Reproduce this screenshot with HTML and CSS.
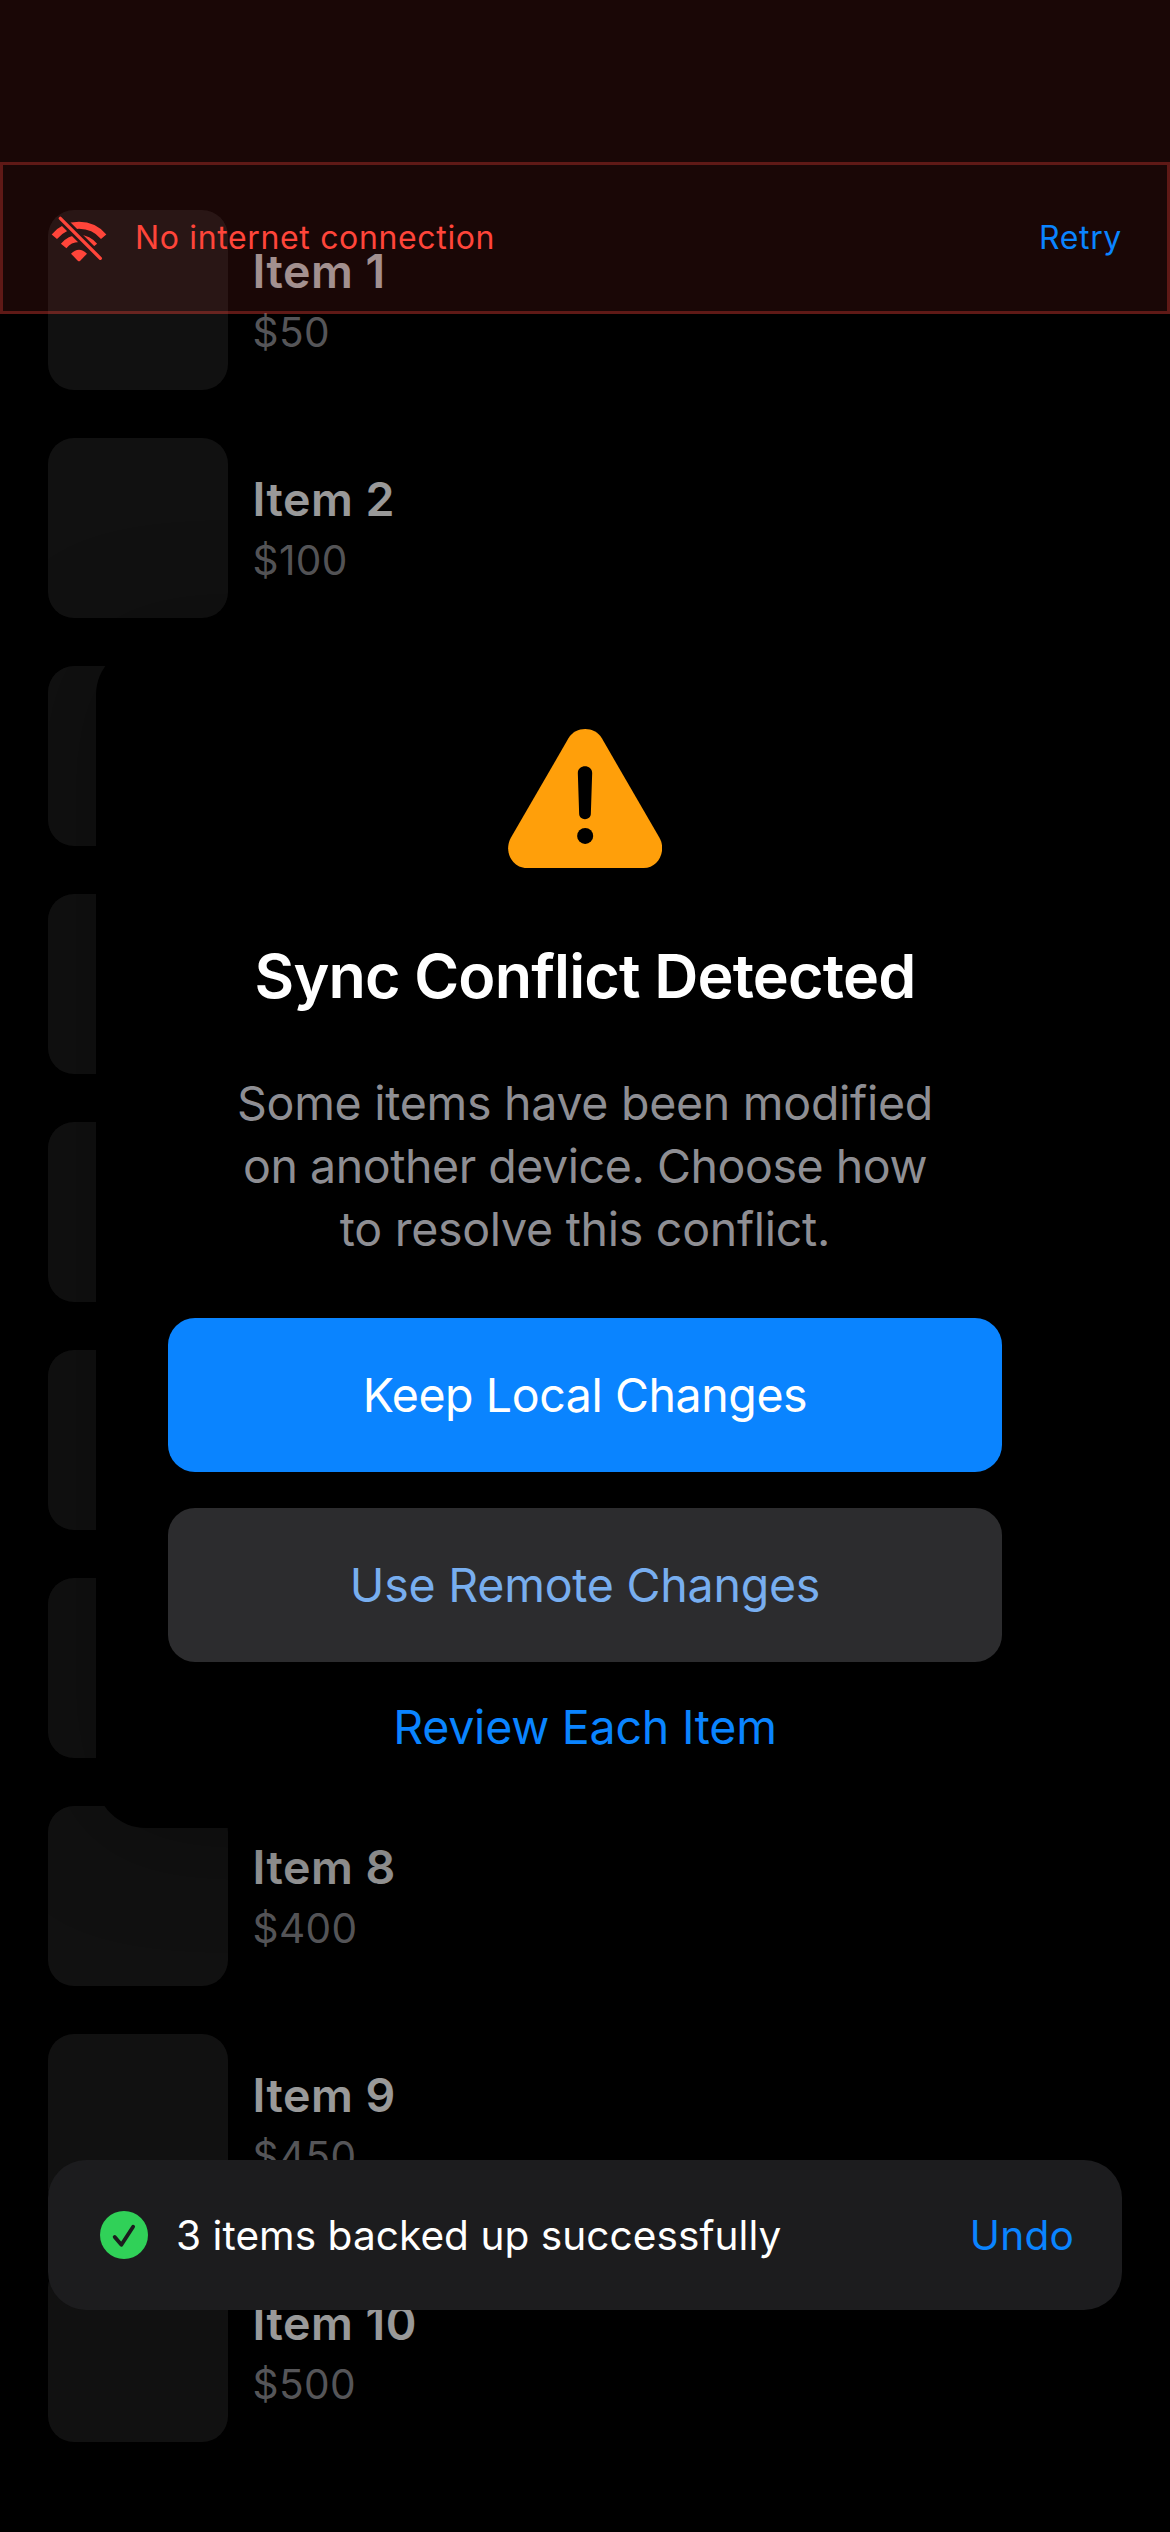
FILE: index.html
```html
<!DOCTYPE html>
<html lang="en">
<head>
<meta charset="utf-8">
<title>Items</title>
<link rel="stylesheet" href="styles.css">
</head>
<body>
<div class="screen">
  <ul class="list">
    <li class="row"><div class="thumb"></div><div class="info"><h2 class="name">Item 1</h2><p class="price">$50</p></div></li>
    <li class="row"><div class="thumb"></div><div class="info"><h2 class="name">Item 2</h2><p class="price">$100</p></div></li>
    <li class="row"><div class="thumb"></div></li>
    <li class="row"><div class="thumb"></div></li>
    <li class="row"><div class="thumb"></div></li>
    <li class="row"><div class="thumb"></div></li>
    <li class="row"><div class="thumb"></div></li>
    <li class="row"><div class="thumb"></div><div class="info"><h2 class="name">Item 8</h2><p class="price">$400</p></div></li>
    <li class="row"><div class="thumb"></div><div class="info"><h2 class="name">Item 9</h2><p class="price">$450</p></div></li>
    <li class="row"><div class="thumb"></div><div class="info"><h2 class="name">Item 10</h2><p class="price">$500</p></div></li>
  </ul>

  <div class="backdrop">
    <section class="dialog">
      <svg class="warning" viewBox="84 87 461 416" aria-hidden="true">
        <path fill="#ff9f0a" d="M265 115C287 78 343 78 365 115L537 412C560 452 534 503 490 503H140C96 503 70 452 93 412Z"/>
        <path d="M293 219C293 192 336 192 336 219L332 341C332 362 297 362 297 341Z"/>
        <circle cx="315" cy="407" r="24"/>
      </svg>
      <h1 class="title">Sync Conflict Detected</h1>
      <p class="message">Some items have been modified<br><span class="tight">on another device. Choose how</span><br>to resolve this conflict.</p>
      <button class="button primary">Keep Local Changes</button>
      <button class="button secondary">Use Remote Changes</button>
      <button class="link">Review Each Item</button>
    </section>
  </div>

  <header class="offline">
    <div class="banner">
      <svg class="wifi" viewBox="60 75 174 144" aria-hidden="true">
        <mask id="cut" maskUnits="userSpaceOnUse" x="60" y="75" width="174" height="144">
          <rect x="60" y="75" width="174" height="144" fill="#fff"/>
          <path d="M81 75L221 215" stroke="#000" stroke-width="26"/>
        </mask>
        <g mask="url(#cut)" fill="none" stroke="#ff453a" stroke-width="21">
          <path d="M73 140A97 97 0 0 1 221 140"/>
          <path d="M101 168A58 58 0 0 1 193 168"/>
        </g>
        <path d="M123 191Q147 167 171 191L150 213Q147 215 144 213Z" fill="#ff453a"/>
        <path d="M91 85L211 205" stroke="#ff453a" stroke-width="10" stroke-linecap="round"/>
      </svg>
      <span class="status">No internet connection</span>
      <a class="retry">Retry</a>
    </div>
  </header>

  <footer class="dock">
    <div class="toast">
      <svg class="check" viewBox="0 0 48 48" aria-hidden="true">
        <circle cx="24" cy="24" r="24" fill="#30d158"/>
        <path d="M14.7 26L21.4 33.8L33.1 15.7" fill="none" stroke="#1c1c1e" stroke-width="3.8" stroke-linecap="round" stroke-linejoin="round"/>
      </svg>
      <span class="note">3 items backed up successfully</span>
      <a class="undo">Undo</a>
    </div>
  </footer>
</div>
</body>
</html>
```
FILE: styles.css
```css
* { box-sizing: border-box; margin: 0; padding: 0; }

body {
  background: #000;
  color: #fff;
  font-family: Inter, "Liberation Sans", sans-serif;
}

/* Layers share a single grid cell and stack in source order. */
.screen {
  display: grid;
  grid-template: 2532px / 1170px;
  overflow: hidden;
}
.list, .backdrop, .offline, .dock { grid-area: 1 / 1; position: relative; }

.list {
  display: flex;
  flex-direction: column;
  gap: 48px;
  padding: 210px 48px 0;
  list-style: none;
}
.row { display: flex; align-items: center; gap: 24.5px; height: 180px; }
.thumb { width: 180px; height: 180px; border-radius: 26px; background: #1d1d1d; }
.info { padding-bottom: 1px; }
.name { font-size: 46.5px; font-weight: 600; line-height: 58px; letter-spacing: .5px; }
.price { margin-top: 8px; font-size: 40.6px; line-height: 50px; letter-spacing: .4px; color: #8e8e93; }

.backdrop {
  display: flex;
  align-items: flex-start;
  justify-content: center;
  padding-top: 645px;
  background: rgba(0, 0, 0, .4);
}
.dialog {
  display: flex;
  flex-direction: column;
  align-items: center;
  width: 978px;
  padding: 84px 72px 72px;
  border-radius: 50px;
  background: #000;
  box-shadow: 0 0 120px rgba(0, 0, 0, .33);
  text-align: center;
}
.warning { width: 154px; height: 139px; }
.title { margin-top: 68px; font-size: 61px; font-weight: 600; line-height: 80px; letter-spacing: -.83px; }
.message { margin-top: 56px; font-size: 46.5px; line-height: 63px; letter-spacing: -.28px; color: #8e8e93; }
.tight { letter-spacing: -.45px; }

button { border: 0; background: none; font-family: inherit; font-size: 46.5px; letter-spacing: -.23px; }
.button { width: 100%; height: 154px; border-radius: 27px; }
.primary { margin-top: 57px; background: #0a84ff; color: #fff; letter-spacing: -.42px; }
.secondary { margin-top: 36px; background: #2c2c2e; color: #78aeef; }
.link { margin-top: 36px; line-height: 58px; color: #0a84ff; }

.offline {
  align-self: start;
  height: 314px;
  padding-top: 162px;
  background: rgba(255, 69, 58, .1);
}
.banner {
  display: flex;
  align-items: center;
  height: 152px;
  padding: 0 45px 0 47px;
  border: 3px solid rgba(255, 69, 58, .3);
  font-size: 32px;
  letter-spacing: .65px;
}
.wifi { width: 58px; height: 48px; margin-top: 2px; }
.status { flex: 1; margin-left: 27px; padding-bottom: 2px; color: #ff453a; }
.retry { padding-bottom: 2px; color: #0a84ff; }

.dock { align-self: end; padding: 0 48px 222px; }
.toast {
  display: flex;
  align-items: center;
  height: 150px;
  padding: 0 48px 0 52px;
  border-radius: 38px;
  background: #1c1c1e;
  font-size: 40.6px;
  letter-spacing: .05px;
}
.check { width: 48px; height: 48px; }
.note { flex: 1; margin-left: 28px; }
.undo { color: #0a84ff; letter-spacing: .2px; }
```
